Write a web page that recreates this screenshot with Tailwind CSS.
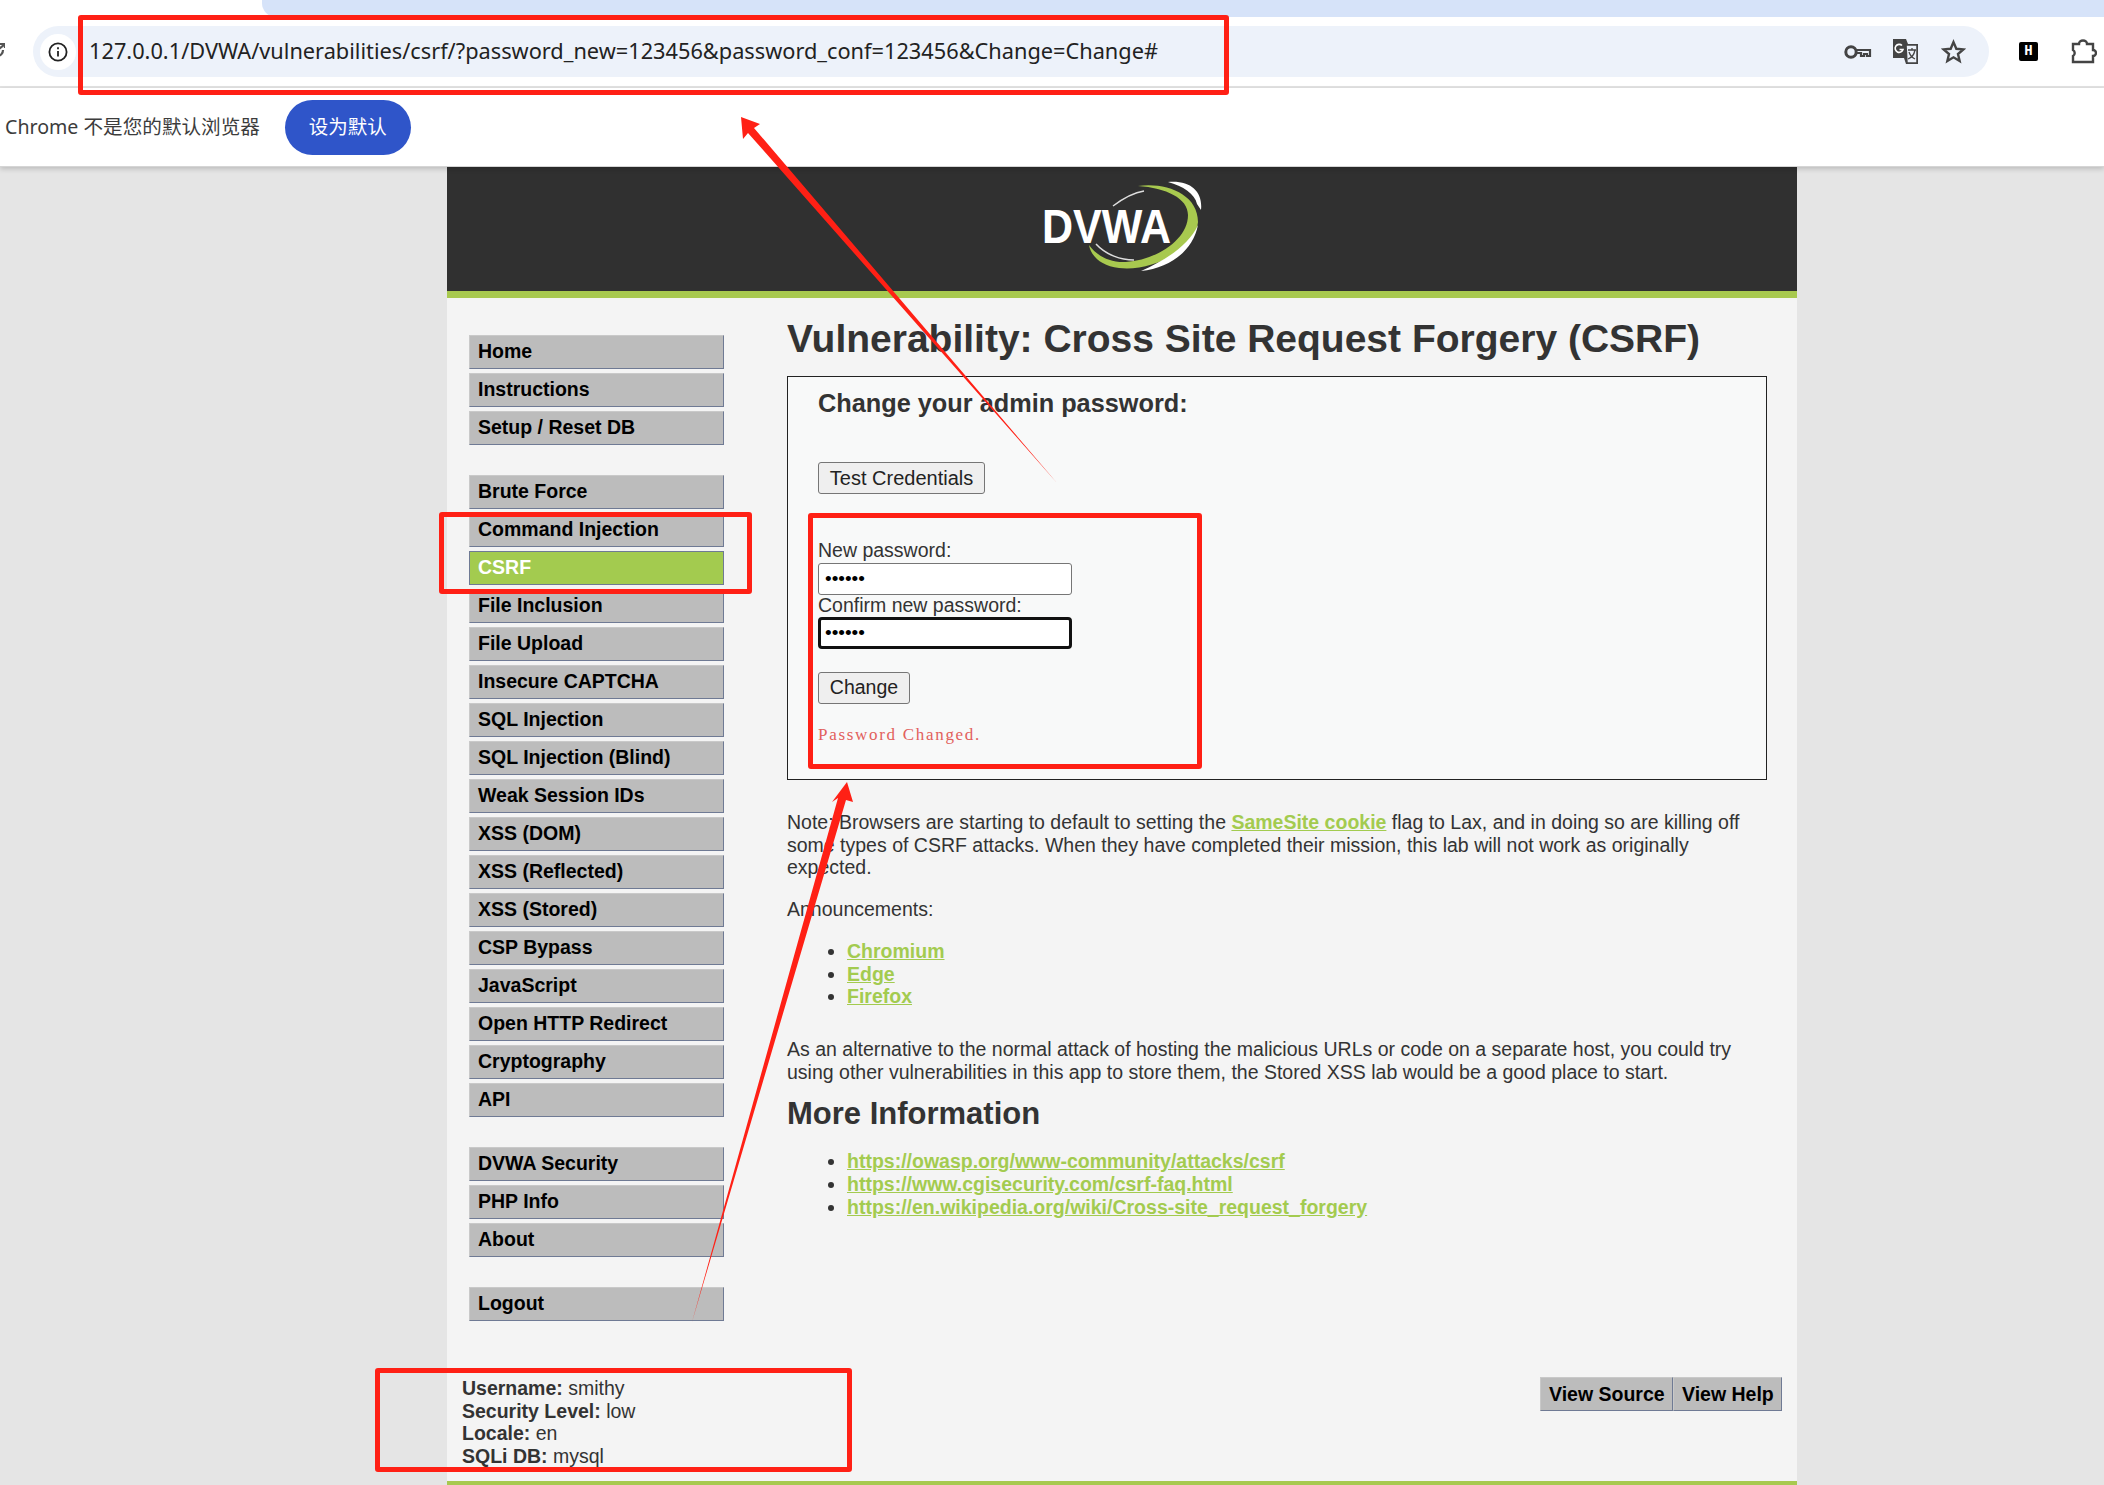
<!DOCTYPE html>
<html>
<head>
<meta charset="utf-8">
<title>DVWA CSRF</title>
<script src="https://cdn.jsdelivr.net/npm/@tailwindcss/browser@4"></script>
</head>
<body class="bg-[#e5e5e5] font-['Liberation_Sans',sans-serif] text-[#333]">
<div class="relative w-[2104px] h-[1485px] overflow-hidden">

    <!-- Browser chrome -->
    <div class="bg-white h-[88px] border-b-2 border-[#e3e3e3] relative">
        <div class="ml-[262px] h-[17px] bg-[#d6e3f9] rounded-bl-[14px]"></div>
        <svg class="absolute left-0 top-[43px] w-[5px] h-[15px]" viewBox="0 0 5 15" fill="none" stroke="#555" stroke-width="2.200"><path d="M-3 13C1 13 3 10 3 7M-1 6L5 1M0 1H5V5"/></svg>
        <div class="mt-[9px] ml-[33px] w-[1956px] h-[51px] bg-[#edf2fa] rounded-full flex items-center pl-[7px] pr-[23px]">
            <div class="w-[36px] h-[36px] bg-white rounded-full flex items-center justify-center shrink-0">
                <svg class="w-[20px] h-[20px]" viewBox="0 0 20 20" fill="none" stroke="#222" stroke-width="1.8"><circle cx="10" cy="10" r="8.6"/><path d="M10 9v5.5M10 5.2v2"/></svg>
            </div>
            <span class="ml-[13px] text-[21.75px] text-[#222] font-['Noto_Sans',sans-serif] whitespace-nowrap">127.0.0.1/DVWA/vulnerabilities/csrf/?password_new=123456&amp;password_conf=123456&amp;Change=Change#</span>
            <div class="ml-auto flex items-center gap-[22px]">
                <svg class="w-[28px] h-[18px] mr-[-2px]" viewBox="0 0 28 18" fill="none" stroke="#444" stroke-width="3"><circle cx="7" cy="9" r="5.200"/><path d="M12 7h14v6h-3v-2h-3v2h-3v-3h-5" stroke-width="2.200"/></svg>
                <svg class="w-[27px] h-[27px]" viewBox="0 0 27 27"><path d="M1 1h13l2 5h10v20H14l-2-6H1z" fill="#444"/><path d="M14 7h11v18H15z" fill="#edf2fa" stroke="#444" stroke-width="1.5"/><path d="M10 7.500a4 4 0 1 0 1 4H7.500" fill="none" stroke="#fff" stroke-width="1.6"/><path d="M16 12h8M20 10v2M23 12c-1 5-4 8-7 9M17 14c1 3 4 6 6 7" fill="none" stroke="#444" stroke-width="1.3"/></svg>
                <svg class="w-[25px] h-[25px]" viewBox="0 0 24 24" fill="none" stroke="#444" stroke-width="2.3" stroke-linejoin="miter"><path d="M12 3l2.700 6.400 6.800.6-5.200 4.400 1.600 6.700L12 17.600l-5.900 3.500 1.600-6.700L2.500 10l6.800-.6z"/></svg>
            </div>
        </div>
        <div class="absolute left-[2019px] top-[42px] w-[19px] h-[19px] bg-black rounded-[2px] flex items-center justify-center text-white text-[14px] font-bold font-['Liberation_Mono',monospace]">H</div>
        <svg class="absolute left-[2071px] top-[38px] w-[26px] h-[26px]" viewBox="0 0 26 26" fill="none" stroke="#444" stroke-width="2.4"><path d="M2 6h6a4 3.500 0 0 1 8 0h6v6a3 3 0 0 1 0 6v6H2v-6a3.500 3.500 0 0 0 0-6z"/></svg>
    </div>

    <!-- Default browser infobar -->
    <div class="relative z-10 h-[79px] bg-white border-b border-[#d5d5d5] shadow-[0_2px_5px_rgba(0,0,0,0.18)] flex items-center pl-[5px] font-['Noto_Sans','Noto_Sans_CJK_SC',sans-serif]">
        <span class="text-[19.6px] text-[#3c3c3c]">Chrome 不是您的默认浏览器</span>
        <span class="ml-[25px] w-[126px] h-[55px] bg-[#2f55c9] text-white rounded-full flex items-center justify-center text-[19.5px]">设为默认</span>
    </div>

    <!-- DVWA page -->
    <div class="ml-[447px] w-[1350px] h-[1318px] bg-[#f4f4f4] flex flex-col">
        <div class="h-[131px] bg-[#303030] border-b-[7px] border-[#a8c94f] shrink-0 flex justify-center">
            <svg class="mt-[-7px] ml-[-2px] w-[240px] h-[130px]" viewBox="0 0 240 130">
                <text x="41" y="83" fill="#fff" font-size="49" font-weight="700" font-family="Liberation Sans" textLength="129" lengthAdjust="spacingAndGlyphs">DVWA</text>
                <path d="M137 26C165 22 197 34 197 62C195 90 150 112 118 108C100 106 90 96 88 85C95 95 108 103 125 102C155 100 187 80 187 55C187 38 165 28 137 26Z" fill="#a8c94f"/>
                <path d="M167 22C190 20 202 32 200 50L196 44C194 34 182 26 167 22ZM197 65C192 90 170 108 140 111C165 100 188 85 197 65Z" fill="#fff"/>
                <path d="M143 31C130 33 120 40 112 46M95 84C105 95 120 100 133 100" fill="none" stroke="#ddd" stroke-width="1.5"/>
            </svg>
        </div>

        <div class="flex flex-1">
            <!-- Menu -->
            <nav class="ml-[22px] w-[255px] mt-[37px] shrink-0 text-[19.5px] font-bold text-black leading-[31px]">
                <ul class="flex flex-col gap-[4px]">
                    <li class="h-[34px] pl-[8px] bg-[#bcbcbc] border border-[#c9c9c9] border-r-[#6f7a94] border-b-[#6f7a94]">Home</li>
                    <li class="h-[34px] pl-[8px] bg-[#bcbcbc] border border-[#c9c9c9] border-r-[#6f7a94] border-b-[#6f7a94]">Instructions</li>
                    <li class="h-[34px] pl-[8px] bg-[#bcbcbc] border border-[#c9c9c9] border-r-[#6f7a94] border-b-[#6f7a94]">Setup / Reset DB</li>
                </ul>
                <ul class="mt-[30px] flex flex-col gap-[4px]">
                    <li class="h-[34px] pl-[8px] bg-[#bcbcbc] border border-[#c9c9c9] border-r-[#6f7a94] border-b-[#6f7a94]">Brute Force</li>
                    <li class="h-[34px] pl-[8px] bg-[#bcbcbc] border border-[#c9c9c9] border-r-[#6f7a94] border-b-[#6f7a94]">Command Injection</li>
                    <li class="h-[34px] pl-[8px] bg-[#a3cb4f] text-white border border-[#6f7a94]">CSRF</li>
                    <li class="h-[34px] pl-[8px] bg-[#bcbcbc] border border-[#c9c9c9] border-r-[#6f7a94] border-b-[#6f7a94]">File Inclusion</li>
                    <li class="h-[34px] pl-[8px] bg-[#bcbcbc] border border-[#c9c9c9] border-r-[#6f7a94] border-b-[#6f7a94]">File Upload</li>
                    <li class="h-[34px] pl-[8px] bg-[#bcbcbc] border border-[#c9c9c9] border-r-[#6f7a94] border-b-[#6f7a94]">Insecure CAPTCHA</li>
                    <li class="h-[34px] pl-[8px] bg-[#bcbcbc] border border-[#c9c9c9] border-r-[#6f7a94] border-b-[#6f7a94]">SQL Injection</li>
                    <li class="h-[34px] pl-[8px] bg-[#bcbcbc] border border-[#c9c9c9] border-r-[#6f7a94] border-b-[#6f7a94]">SQL Injection (Blind)</li>
                    <li class="h-[34px] pl-[8px] bg-[#bcbcbc] border border-[#c9c9c9] border-r-[#6f7a94] border-b-[#6f7a94]">Weak Session IDs</li>
                    <li class="h-[34px] pl-[8px] bg-[#bcbcbc] border border-[#c9c9c9] border-r-[#6f7a94] border-b-[#6f7a94]">XSS (DOM)</li>
                    <li class="h-[34px] pl-[8px] bg-[#bcbcbc] border border-[#c9c9c9] border-r-[#6f7a94] border-b-[#6f7a94]">XSS (Reflected)</li>
                    <li class="h-[34px] pl-[8px] bg-[#bcbcbc] border border-[#c9c9c9] border-r-[#6f7a94] border-b-[#6f7a94]">XSS (Stored)</li>
                    <li class="h-[34px] pl-[8px] bg-[#bcbcbc] border border-[#c9c9c9] border-r-[#6f7a94] border-b-[#6f7a94]">CSP Bypass</li>
                    <li class="h-[34px] pl-[8px] bg-[#bcbcbc] border border-[#c9c9c9] border-r-[#6f7a94] border-b-[#6f7a94]">JavaScript</li>
                    <li class="h-[34px] pl-[8px] bg-[#bcbcbc] border border-[#c9c9c9] border-r-[#6f7a94] border-b-[#6f7a94]">Open HTTP Redirect</li>
                    <li class="h-[34px] pl-[8px] bg-[#bcbcbc] border border-[#c9c9c9] border-r-[#6f7a94] border-b-[#6f7a94]">Cryptography</li>
                    <li class="h-[34px] pl-[8px] bg-[#bcbcbc] border border-[#c9c9c9] border-r-[#6f7a94] border-b-[#6f7a94]">API</li>
                </ul>
                <ul class="mt-[30px] flex flex-col gap-[4px]">
                    <li class="h-[34px] pl-[8px] bg-[#bcbcbc] border border-[#c9c9c9] border-r-[#6f7a94] border-b-[#6f7a94]">DVWA Security</li>
                    <li class="h-[34px] pl-[8px] bg-[#bcbcbc] border border-[#c9c9c9] border-r-[#6f7a94] border-b-[#6f7a94]">PHP Info</li>
                    <li class="h-[34px] pl-[8px] bg-[#bcbcbc] border border-[#c9c9c9] border-r-[#6f7a94] border-b-[#6f7a94]">About</li>
                </ul>
                <ul class="mt-[30px]">
                    <li class="h-[34px] pl-[8px] bg-[#bcbcbc] border border-[#c9c9c9] border-r-[#6f7a94] border-b-[#6f7a94]">Logout</li>
                </ul>
            </nav>

            <!-- Content -->
            <main class="ml-[63px] w-[980px] text-[19.5px] leading-[22.7px]">
                <h1 class="mt-[17px] text-[39px] leading-[48px] font-bold">Vulnerability: Cross Site Request Forgery (CSRF)</h1>
                <div class="mt-[13px] h-[404px] bg-[#f8f9f9] border-[1.5px] border-[#222] pl-[30px]">
                    <h3 class="mt-[11px] text-[25.3px] leading-[30px] font-bold">Change your admin password:</h3>
                    <button class="block mt-[44px] w-[167px] h-[32px] bg-[#efefef] border border-[#767676] rounded-[3px] text-center text-[20px] text-[#222]">Test Credentials</button>
                    <label class="block mt-[45px]">New password:</label>
                    <input type="password" value="123456" class="block mt-[1px] w-[254px] h-[32px] bg-white border border-[#767676] rounded-[3px] px-[6px] text-[19px] text-black">
                    <label class="block h-[22px] leading-[21px]">Confirm new password:</label>
                    <input type="password" value="123456" class="block w-[254px] h-[32px] bg-white border-[3px] border-[#111] rounded-[4px] px-[4px] text-[19px] text-black">
                    <button class="block mt-[23px] w-[92px] h-[32px] bg-[#efefef] border border-[#767676] rounded-[3px] text-center text-[#222]">Change</button>
                    <pre class="mt-[21px] text-[17px] leading-[20px] tracking-[1.7px] text-[#e2605c] font-['Liberation_Serif',serif]">Password Changed.</pre>
                </div>

                <p class="mt-[31px]">Note: Browsers are starting to default to setting the <a class="font-bold underline text-[#a3cb4f]">SameSite cookie</a> flag to Lax, and in doing so are killing off some types of CSRF attacks. When they have completed their mission, this lab will not work as originally expected.</p>
                <p class="mt-[19px]">Announcements:</p>
                <ul class="mt-[19px] ml-[60px] list-disc font-bold text-[#a3cb4f] underline">
                    <li class="marker:text-[#333]">Chromium</li>
                    <li class="marker:text-[#333]">Edge</li>
                    <li class="marker:text-[#333]">Firefox</li>
                </ul>
                <p class="mt-[30px]">As an alternative to the normal attack of hosting the malicious URLs or code on a separate host, you could try using other vulnerabilities in this app to store them, the Stored XSS lab would be a good place to start.</p>
                <h2 class="mt-[11px] text-[31px] leading-[40px] font-bold">More Information</h2>
                <ul class="mt-[16px] ml-[60px] list-disc font-bold text-[#a3cb4f] underline">
                    <li class="marker:text-[#333]">https://owasp.org/www-community/attacks/csrf</li>
                    <li class="marker:text-[#333]">https://www.cgisecurity.com/csrf-faq.html</li>
                    <li class="marker:text-[#333]">https://en.wikipedia.org/wiki/Cross-site_request_forgery</li>
                </ul>
            </main>
        </div>

        <!-- Footer -->
        <div class="h-[115px] shrink-0 flex justify-between pl-[15px] pr-[15px] text-[19.5px] leading-[22.7px]">
            <div class="pt-[11px]">
                <div><b>Username:</b> smithy</div>
                <div><b>Security Level:</b> low</div>
                <div><b>Locale:</b> en</div>
                <div><b>SQLi DB:</b> mysql</div>
            </div>
            <div class="flex mt-[11px] h-[34px] text-black font-bold leading-[32px]">
                <span class="w-[133px] pl-[8px] bg-[#bcbcbc] border border-[#c9c9c9] border-r-[#6f7a94] border-b-[#6f7a94]">View Source</span>
                <span class="w-[109px] pl-[8px] bg-[#bcbcbc] border border-[#c9c9c9] border-r-[#6f7a94] border-b-[#6f7a94]">View Help</span>
            </div>
        </div>
        <div class="h-[4px] bg-[#a8c94f] shrink-0"></div>
    </div>

    <!-- Red annotations drawn over the screenshot -->
    <div class="absolute z-20 left-[78px] top-[15px] w-[1151px] h-[80px] border-[5px] border-[#ff2015] rounded-[3px]"></div>
    <div class="absolute z-20 left-[439px] top-[512px] w-[313px] h-[82px] border-[5px] border-[#ff2015] rounded-[3px]"></div>
    <div class="absolute z-20 left-[808px] top-[513px] w-[394px] h-[256px] border-[5px] border-[#ff2015] rounded-[3px]"></div>
    <div class="absolute z-20 left-[375px] top-[1368px] w-[477px] h-[104px] border-[5px] border-[#ff2015] rounded-[3px]"></div>
    <svg class="absolute z-20 left-0 top-0 w-[2104px] h-[1485px] pointer-events-none" viewBox="0 0 2104 1485">
        <path d="M741 117L760 124L754 128L1057 483L748 133L743 139Z" fill="#ff2015"/>
        <path d="M847 782L853 802L846 800L692 1322L838 798L832 802Z" fill="#ff2015"/>
    </svg>
</div>
</body>
</html>
